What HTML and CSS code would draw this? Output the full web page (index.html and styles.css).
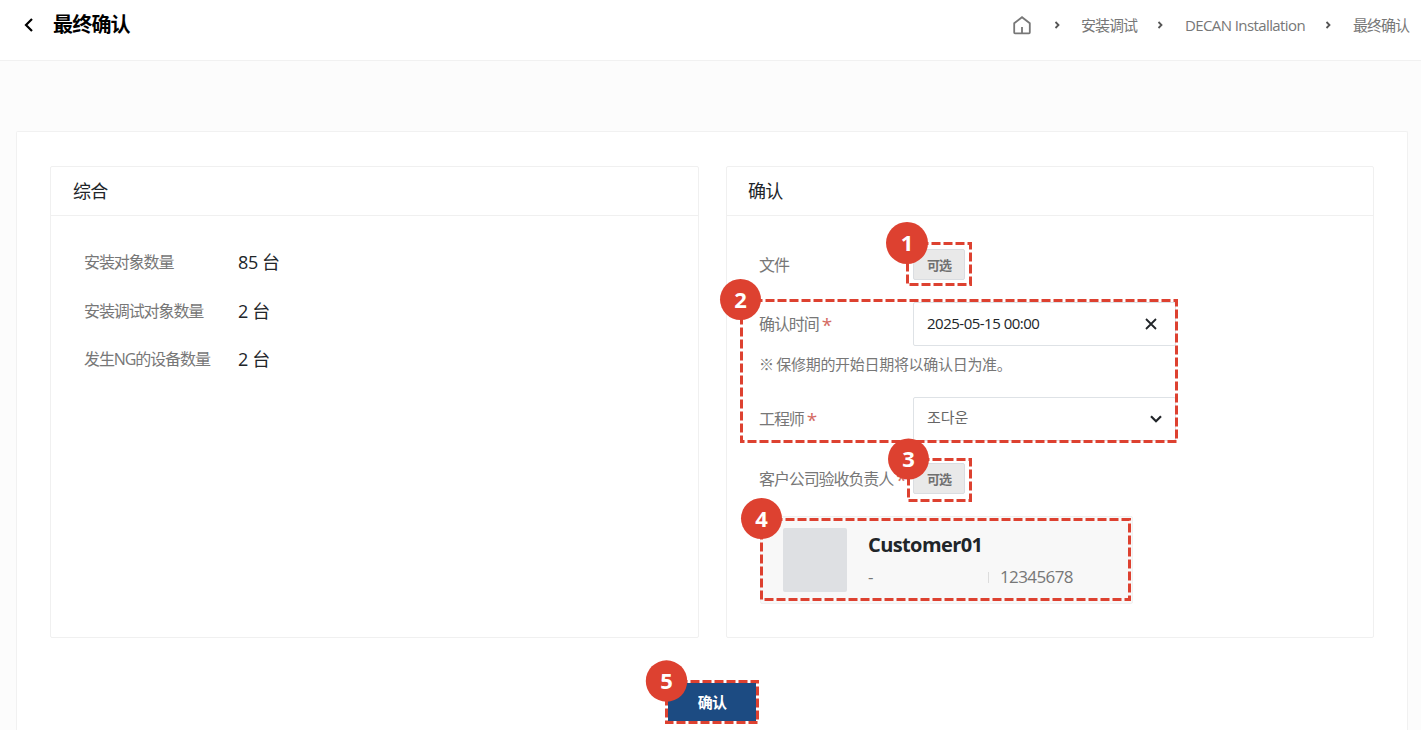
FILE: index.html
```html
<!DOCTYPE html>
<html lang="zh-CN">
<head>
<meta charset="utf-8">
<title>最终确认</title>
<link rel="stylesheet" href="styles.css">
</head>
<body>
<header class="topbar">
  <div class="heading">
    <svg class="back" viewBox="0 0 10 14"><path d="M8 1 2 7l6 6"/></svg>
    <h1>最终确认</h1>
  </div>
  <nav class="crumbs">
    <svg class="home" viewBox="0 0 18 19"><path d="M1.200 7.200 9 1.200l7.800 6V16.500q0 .8-.8.8H2q-.8 0-.8-.8ZM9 11v6"/></svg>
    <svg class="sep sep-first" viewBox="0 0 6 8"><path d="m1.500 1 3 3-3 3"/></svg>
    <span class="crumb">安装调试</span>
    <svg class="sep" viewBox="0 0 6 8"><path d="m1.500 1 3 3-3 3"/></svg>
    <span class="crumb latin">DECAN Installation</span>
    <svg class="sep" viewBox="0 0 6 8"><path d="m1.500 1 3 3-3 3"/></svg>
    <span class="crumb last">最终确认</span>
  </nav>
</header>
<main class="card">
  <div class="panels">
    <section class="panel">
      <h2>综合</h2>
      <dl class="summary">
        <dt>安装对象数量</dt><dd>85 台</dd>
        <dt>安装调试对象数量</dt><dd>2 台</dd>
        <dt>发生NG的设备数量</dt><dd>2 台</dd>
      </dl>
    </section>
    <section class="panel confirm-panel">
      <h2>确认</h2>
      <div class="form">
        <div class="row row-file"><span class="label">文件</span><button class="pick">可选</button></div>
        <div class="row row-time"><span class="label">确认时间 <i>*</i></span>
          <div class="field date"><span>2025-05-15 00:00</span><svg class="clear" viewBox="0 0 12 12"><path d="m1 1 10 10M11 1 1 11"/></svg></div>
        </div>
        <p class="note">※ 保修期的开始日期将以确认日为准。</p>
        <div class="row row-engineer"><span class="label">工程师 <i>*</i></span>
          <div class="field"><span class="korean">조다운</span><svg class="down" viewBox="0 0 12 8"><path d="m1 1.200 5 5 5-5"/></svg></div>
        </div>
        <div class="row row-customer"><span class="label">客户公司验收负责人 <i>*</i></span><button class="pick">可选</button></div>
        <div class="customer">
          <div class="avatar"></div>
          <div class="who"><strong>Customer01</strong><div class="meta"><span>-</span><span class="phone">12345678</span></div></div>
        </div>
      </div>
    </section>
  </div>
  <div class="actions"><button class="confirm">确认</button></div>
</main>
<svg class="callouts" viewBox="0 0 1421 730">
  <g class="outline">
    <rect x="907.500" y="243.500" width="63" height="41"/>
    <rect x="741.500" y="300.500" width="435" height="141"/>
    <rect x="908.500" y="459.500" width="62" height="41"/>
    <rect x="761.500" y="519.500" width="368" height="80"/>
    <rect class="solid-gap" x="666.500" y="681.500" width="91" height="41"/>
    <rect x="666.500" y="681.500" width="91" height="41"/>
  </g>
  <g class="badge">
    <circle cx="907" cy="243" r="21"/><text x="907" y="251">1</text>
    <circle cx="740.500" cy="299.500" r="20.500"/><text x="740.500" y="307.500">2</text>
    <circle cx="908.500" cy="459" r="20.500"/><text x="908.500" y="467">3</text>
    <circle cx="761.500" cy="518.500" r="20.500"/><text x="761.500" y="527">4</text>
    <circle cx="666.500" cy="681" r="20.700"/><text x="666.500" y="689">5</text>
  </g>
</svg>
</body>
</html>
```
FILE: styles.css
```css
* { box-sizing: border-box; }
body {
  margin: 0; height: 730px; overflow: hidden; position: relative;
  background: #fcfcfc; color: #212529;
  font-family: "Open Sans", "Noto Sans CJK SC", sans-serif;
}
h1, h2, p, dl, dd { margin: 0; font-weight: 400; }
svg { fill: none; flex: none; }
.topbar {
  height: 61px; padding: 0 12px 10px 24px; background: #fff;
  border-bottom: 1px solid #f1f1f1;
  display: flex; justify-content: space-between; align-items: center;
}
.heading { display: flex; align-items: center; gap: 19px; }
.back { width: 10px; height: 14px; stroke: #000; stroke-width: 2.2; }
h1 { font-size: 20px; line-height: 28px; font-weight: 700; letter-spacing: -.8px; color: #000; }
.crumbs { display: flex; align-items: center; color: #777; font-size: 15px; line-height: 24px; }
.home { width: 18px; height: 19px; stroke: #777; stroke-width: 1.8; margin-right: 23px; }
.sep { width: 6px; height: 8px; stroke: #555; stroke-width: 1.8; margin: 0 22px 0 20px; }
.sep.sep-first { margin: 0 21px 0 0; }
.crumb { width: 56px; letter-spacing: -1px; white-space: nowrap; }
.crumb.latin { width: 120px; letter-spacing: -.6px; }
.card {
  margin: 70px 13px 0 16px; padding: 34px 33px 0; height: 599px;
  background: #fff; border: 1px solid #f1f1f1; border-bottom: 0; border-radius: 2px 2px 0 0;
}
.panels { display: grid; grid-template-columns: 649px 648px; gap: 27px; }
.panel { height: 472px; border: 1px solid #f0f0f0; border-radius: 2px; }
h2 { height: 49px; padding-left: 22px; line-height: 49px; border-bottom: 1px solid #f0f0f0; font-size: 18px; letter-spacing: -.8px; }
.confirm-panel h2 { padding-left: 21px; }
.summary { display: grid; grid-template-columns: 154px 1fr; grid-auto-rows: 48.500px; padding: 22px 0 0 33px; line-height: 49px; }
dt { font-size: 16px; letter-spacing: -1.100px; color: #777; white-space: nowrap; }
dd { font-size: 18px; line-height: 48px; letter-spacing: -.4px; }
.form { padding: 33px 0 0 32px; }
.row { display: flex; align-items: center; }
.label { width: 154px; flex: none; white-space: nowrap; font-size: 16px; line-height: 24px; letter-spacing: -1.100px; color: #777; }
.label i { font-style: normal; font-size: 19px; line-height: 20px; vertical-align: -2px; color: #d46a62; }
.row-file { height: 31px; }
.row-time { height: 44px; margin-top: 22px; }
.note { margin-top: 6px; height: 24px; font-size: 15px; line-height: 24px; letter-spacing: -.300px; word-spacing: -1px; color: #777; }
.row-engineer { height: 44px; margin-top: 21px; }
.row-customer { height: 31px; margin-top: 22px; }
.pick {
  width: 52px; height: 31px; padding: 0; border: 1px solid #dadde1; border-radius: 2px; background: #e9e9e9;
  color: #707070; font: 700 13px/27px "Noto Sans CJK SC", sans-serif; letter-spacing: -1px;
}
.field {
  width: 263px; height: 44px; padding: 0 13px; border: 1px solid #dee2e6; border-radius: 2px; background: #fff;
  display: flex; align-items: center; justify-content: space-between;
  font-size: 15px; line-height: 20px; letter-spacing: -.500px; color: #212529;
}
.field span { padding-bottom: 2px; }
.date { padding-right: 18px; }
.field .korean { font-family: "Noto Sans CJK KR", sans-serif; color: #666; letter-spacing: -.1px; padding-bottom: 4px; }
.clear { width: 12px; height: 12px; stroke: #212529; stroke-width: 1.8; }
.down { width: 12px; height: 8px; stroke: #212529; stroke-width: 2.2; }
.customer {
  width: 373px; height: 88px; margin: 22px 0 0 1px; padding: 11px 22px;
  display: flex; gap: 21px; background: #f8f8f8; border: 1px solid #f1f1f1; border-radius: 2px;
}
.avatar { width: 64px; height: 64px; border-radius: 2px; background: #dee0e3; }
strong { display: block; font-size: 20px; line-height: 34px; font-weight: 700; letter-spacing: -.600px; }
.meta { display: flex; align-items: center; justify-content: space-between; width: 205px; font-size: 17px; line-height: 30px; color: #777; }
.phone { position: relative; letter-spacing: -.6px; width: 73px; }
.phone::before { content: ""; position: absolute; left: -12px; top: 10px; width: 1px; height: 11px; background: #ddd; }
.actions { padding: 44px 0 0 617px; }
.confirm {
  display: block; width: 90px; height: 40px; padding: 0; border: 1px solid #16406e; border-radius: 2px; background: #1c4b82;
  color: #fff; font: 700 15px/38px "Noto Sans CJK SC", sans-serif; letter-spacing: -.7px;
}
.callouts { position: absolute; left: 0; top: 0; width: 1421px; height: 730px; }
.outline { stroke: #dd4130; stroke-width: 3; stroke-dasharray: 9 3; }
.outline .solid-gap { stroke: #fff; stroke-dasharray: none; }
.badge { fill: #dd4130; }
.badge text { fill: #fff; font-size: 22px; font-weight: 700; text-anchor: middle; }
```
